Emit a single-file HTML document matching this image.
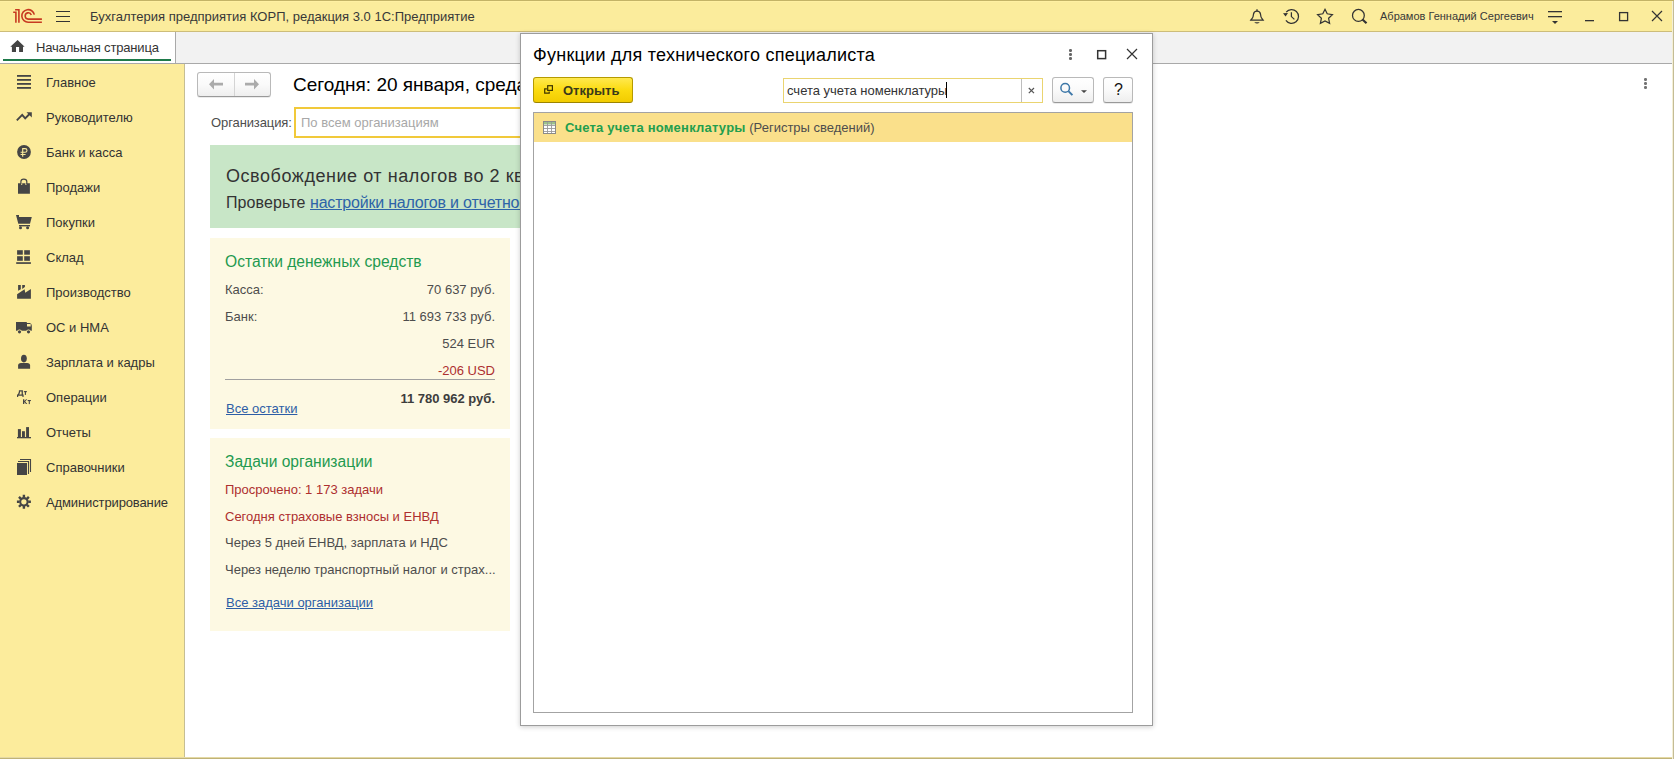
<!DOCTYPE html>
<html><head><meta charset="utf-8">
<style>
*{margin:0;padding:0;box-sizing:border-box}
html,body{width:1674px;height:759px;overflow:hidden;background:#fff;font-family:"Liberation Sans",sans-serif;color:#4d4d4d}
.a{position:absolute;white-space:nowrap}
svg.a{overflow:visible}
.si{position:absolute;left:46px;font-size:13px;color:#333;line-height:16px;white-space:nowrap}
.t13{font-size:13px;line-height:16px}
.lnk{text-decoration:underline}
.red{color:#ad2f2f}
.grn{color:#1f9a50}
.btn{position:absolute;border:1px solid #b9b9b9;border-bottom-color:#999;border-radius:3px;background:linear-gradient(#ffffff,#fafafa 50%,#eeeeee);box-shadow:0 1px 0 rgba(0,0,0,.08)}
</style></head><body>
<!-- ===== header ===== -->
<div class="a" style="left:0;top:0;width:1674px;height:32px;background:#fbec9c;border-bottom:1px solid #cdbd7a"></div>
<svg class="a" style="left:0;top:0" width="50" height="32">
<g fill="none" stroke="#c73a22" stroke-width="1.6" stroke-linecap="butt">
<path d="M13.2 12.3 H15.9 V22.8"/>
<path d="M15.1 9.7 H18.9 V22.8"/>
<path d="M34.3 14.6 A6.3 6.3 0 1 0 28.4 22.2 H41.9"/>
<path d="M31.3 14.9 A3.15 3.15 0 1 0 28.2 19.1 H41.9"/>
</g></svg>
<div class="a" style="left:56px;top:11px;width:14px;height:1.3px;background:#333"></div>
<div class="a" style="left:56px;top:16px;width:14px;height:1.3px;background:#333"></div>
<div class="a" style="left:56px;top:21px;width:14px;height:1.3px;background:#333"></div>
<div class="a t13" style="left:90px;top:9px;color:#383838">Бухгалтерия предприятия КОРП, редакция 3.0 1С:Предприятие</div>
<svg class="a" style="left:0;top:0" width="1674" height="32">
<g fill="none" stroke="#333" stroke-width="1.25">
<path d="M1250.9 20 L1252 18.6 Q1253.3 17 1253.5 14.2 Q1253.9 11.2 1257 11.2 Q1260.1 11.2 1260.5 14.2 Q1260.7 17 1262 18.6 L1263.1 20 Z"/>
<path d="M1286.2 12.2 A6.9 6.9 0 1 1 1285.9 20.4"/>
<path d="M1291.4 12.3 V16.6 L1294.4 19.4"/>
<path d="M1325 9.3 L1327.2 13.8 L1332.4 14.6 L1328.6 18.3 L1329.6 23.3 L1325 20.9 L1320.4 23.3 L1321.4 18.3 L1317.6 14.6 L1322.8 13.8 Z" stroke-linejoin="miter"/>
<circle cx="1358.4" cy="15.4" r="5.9"/>
</g>
<g fill="#333">
<circle cx="1257" cy="10.1" r="0.9"/>
<path d="M1254.2 22.2 H1259.8 Q1257 24.6 1254.2 22.2 Z"/>
<path d="M1283 13.2 L1288 12.9 L1285.6 16.6 Z"/>
</g>
<path d="M1362.5 19.5 L1366.5 23.3" stroke="#333" stroke-width="2.2"/>
<g fill="#333">
<rect x="1548" y="11" width="14" height="1.3"/>
<rect x="1548" y="16" width="14" height="1.3"/>
<path d="M1552 21 H1558 L1555 24 Z"/>
<rect x="1585" y="20" width="9" height="1.3"/>
</g>
<rect x="1619.6" y="12.6" width="8" height="8" fill="none" stroke="#333" stroke-width="1.3"/>
<path d="M1652 11 L1662 21 M1662 11 L1652 21" stroke="#333" stroke-width="1.2"/>
</svg>
<div class="a" style="left:1380px;top:10px;font-size:11px;line-height:13px;color:#383838">Абрамов Геннадий Сергеевич</div>


<!-- ===== tabs ===== -->
<div class="a" style="left:0;top:32px;width:1674px;height:32px;background:#f2f2f2;border-bottom:1px solid #a9a9a9"></div>
<div class="a" style="left:0;top:32px;width:176px;height:31px;background:#fff;border-right:1px solid #a9a9a9"></div>
<div class="a" style="left:3px;top:59px;width:168px;height:2px;background:#1e7a4a"></div>
<svg class="a" style="left:0;top:0" width="30" height="60"><path d="M17.6 40 L24.6 46.8 H23 V52 H19.1 V47 H16 V52 H11.9 V46.8 H10.3 Z" fill="#444"/></svg>
<div class="a t13" style="left:36px;top:40px;color:#333;letter-spacing:-0.17px">Начальная страница</div>

<!-- ===== sidebar ===== -->
<div class="a" style="left:0;top:64px;width:185px;height:695px;background:#fcec9c;border-right:1px solid #c6be93"></div>
<svg class="a" style="left:0;top:0" width="40" height="520">
<g fill="#454545">
<!-- главное -->
<rect x="17" y="75" width="14" height="1.8"/><rect x="17" y="79" width="14" height="1.8"/><rect x="17" y="83" width="14" height="1.8"/><rect x="17" y="87" width="14" height="1.8"/>
<!-- банк -->
<circle cx="24" cy="152" r="6.9"/>
<!-- продажи -->
<path d="M18 183.3 H21 V185 H22.2 V183.3 H25.4 V185 H26.6 V183.3 H29.9 V193.8 H18 Z"/>
<!-- покупки -->
<path d="M16 215 H19 V217 H31.8 L30 223.8 H18.3 Z"/>
<rect x="19" y="225" width="11" height="1.4"/>
<circle cx="20.5" cy="227.7" r="1.5"/><circle cx="27.6" cy="227.7" r="1.5"/>
<!-- склад -->
<rect x="17.1" y="250.2" width="5.7" height="4.5"/><rect x="24.2" y="250.2" width="5.7" height="4.5"/>
<rect x="17.1" y="256.2" width="5.7" height="4.6"/><rect x="24.2" y="256.2" width="5.7" height="4.6"/>
<rect x="16.2" y="262.2" width="14.7" height="1.7"/>
<!-- производство -->
<path d="M18.1 285 H20.8 V289.2 L18.1 290.7 Z"/>
<path d="M22.2 285 H24.9 V287 L22.2 289 Z"/>
<path d="M17.1 294.2 L24.6 289.3 L25.2 292.8 L30.9 289.1 V298.8 H17.1 Z"/>
<!-- ОС -->
<path d="M16 322 H26.8 V323 H29.8 Q31.8 323.5 31.8 325.8 V330.8 H16 Z"/>
<circle cx="19.5" cy="331.8" r="2.3" fill="#fcec9c"/><circle cx="28.5" cy="331.8" r="2.3" fill="#fcec9c"/>
<circle cx="19.5" cy="331.8" r="1.6"/><circle cx="28.5" cy="331.8" r="1.6"/>
<!-- зарплата -->
<ellipse cx="23.9" cy="358.6" rx="2.9" ry="3.8"/>
<path d="M18.1 368.8 V365.5 Q18.1 363 21 363 H27.2 Q30.1 363 30.1 365.5 V368.8 Z"/>
<!-- отчеты -->
<rect x="17.9" y="429.1" width="3" height="8.4"/><rect x="22" y="431.2" width="2.9" height="6.3"/><rect x="26.1" y="427.1" width="2.9" height="10.4"/>
<rect x="17" y="437" width="14" height="1.3"/>
<!-- справочники -->
<rect x="17" y="463" width="10" height="12"/>
</g>
<g fill="none" stroke="#454545">
<path d="M16.8 120.3 L22.2 114.8 L25.2 118.3 L29.5 114" stroke-width="1.9"/>
<path d="M20.9 184.5 V181.5 Q20.9 179.2 23.8 179.2 Q26.8 179.2 26.8 181.5 V184.5" stroke-width="1.2"/>
<path d="M18 461.5 H28.5 V474" stroke-width="1.1"/>
<path d="M20 459.5 H30.5 V472" stroke-width="1.1"/>
<circle cx="23.9" cy="501.8" r="3.7" stroke-width="2.1"/>
<path d="M23.9 494.8 V497.5 M23.9 506 V508.8 M16.9 501.8 H19.6 M28.2 501.8 H30.9 M18.95 496.85 L20.9 498.8 M26.9 504.8 L28.85 506.75 M28.85 496.85 L26.9 498.8 M20.9 504.8 L18.95 506.75" stroke-width="2.4"/>
</g>
<path d="M26.5 112.2 H31.8 V117.5 Z" fill="#454545"/>
<g fill="#fcec9c">
<rect x="27" y="324" width="3.7" height="2.5"/>
</g>
<g fill="none" stroke="#fcec9c" stroke-width="1.1">
<path d="M22.7 156.8 V148.6 H25 Q27 148.6 27 150.4 Q27 152.2 25 152.2 H20.6 M20.6 154.5 H25.6"/>
</g>
<g fill="#454545">
<path d="M18.9 390.2 H22.9 V394.6 H23.6 V396.9 H22.4 V395.8 H18.2 V396.9 H17 V394.6 H17.7 Q18.7 393 18.9 391.2 Z M20.1 391.4 Q20 393.3 19.2 394.6 H21.6 V391.4 Z"/>
<rect x="23.9" y="391.1" width="3" height="1.1"/><rect x="24.85" y="391.1" width="1.1" height="3.8"/>
<path d="M23 399.2 H24.3 V401.1 L26.1 399.2 H27.2 L25.2 401.5 L27.3 404.1 H26 L24.3 402.1 V404.1 H23 Z"/>
<rect x="27.7" y="400" width="3.2" height="1.1"/><rect x="28.75" y="400" width="1.1" height="4.1"/>
</g>
</svg>
<div class="si" style="top:75px">Главное</div>
<div class="si" style="top:110px">Руководителю</div>
<div class="si" style="top:145px">Банк и касса</div>
<div class="si" style="top:180px">Продажи</div>
<div class="si" style="top:215px">Покупки</div>
<div class="si" style="top:250px">Склад</div>
<div class="si" style="top:285px">Производство</div>
<div class="si" style="top:320px">ОС и НМА</div>
<div class="si" style="top:355px">Зарплата и кадры</div>
<div class="si" style="top:390px">Операции</div>
<div class="si" style="top:425px">Отчеты</div>
<div class="si" style="top:460px">Справочники</div>
<div class="si" style="top:495px;letter-spacing:-0.12px">Администрирование</div>

<!-- ===== main ===== -->
<div class="btn" style="left:197px;top:72px;width:74px;height:25px"></div>
<div class="a" style="left:234px;top:73px;width:1px;height:23px;background:#d4d4d4"></div>
<svg class="a" style="left:0;top:0" width="280" height="100"><g fill="#ababab">
<path d="M209 84.2 L214 79 V82.8 H223 V85.6 H214 V89.5 Z"/>
<path d="M259 84.2 L254 79 V82.8 H245 V85.6 H254 V89.5 Z"/>
</g></svg>
<div class="a" style="left:293px;top:74px;font-size:19px;line-height:22px;color:#000">Сегодня: 20 января, среда</div>
<div class="a t13" style="left:211px;top:115px;color:#4d4d4d;letter-spacing:-0.1px">Организация:</div>
<div class="a" style="left:294px;top:107px;width:260px;height:31px;border:2px solid #f1c93a;background:#fff"></div>
<div class="a" style="left:301px;top:115px;font-size:13px;line-height:16px;color:#a8a8a8">По всем организациям</div>
<!-- banner -->
<div class="a" style="left:210px;top:145px;width:330px;height:83px;background:#c8e6c7"></div>
<div class="a" style="left:226px;top:166px;font-size:18px;line-height:20px;color:#333;letter-spacing:0.55px">Освобождение от налогов во 2 квартале</div>
<div class="a" style="left:226px;top:193px;font-size:16px;line-height:19px;color:#333;letter-spacing:0.1px">Проверьте <span class="lnk" style="color:#2d63a8;letter-spacing:-0.2px">настройки налогов и отчетности</span></div>
<!-- card 1 -->
<div class="a" style="left:210px;top:238px;width:300px;height:191px;background:#fdf9e3"></div>
<div class="a grn" style="left:225px;top:253px;font-size:15.6px;line-height:18px">Остатки денежных средств</div>
<div class="a t13" style="left:225px;top:282px">Касса:</div>
<div class="a t13" style="left:225px;top:309px">Банк:</div>
<div class="a t13" style="right:1179px;top:282px">70 637 руб.</div>
<div class="a t13" style="right:1179px;top:309px">11 693 733 руб.</div>
<div class="a t13" style="right:1179px;top:336px">524 EUR</div>
<div class="a t13 red" style="right:1179px;top:363px">-206 USD</div>
<div class="a" style="left:225px;top:379px;width:270px;height:1px;background:#a0a0a0"></div>
<div class="a t13" style="right:1179px;top:391px;font-weight:bold;color:#3d3d3d">11 780 962 руб.</div>
<div class="a t13 lnk" style="left:226px;top:401px;color:#2d5ea6">Все остатки</div>
<!-- card 2 -->
<div class="a" style="left:210px;top:438px;width:300px;height:193px;background:#fdf9e3"></div>
<div class="a grn" style="left:225px;top:453px;font-size:15.6px;line-height:18px">Задачи организации</div>
<div class="a t13 red" style="left:225px;top:482px">Просрочено: 1 173 задачи</div>
<div class="a t13 red" style="left:225px;top:509px">Сегодня страховые взносы и ЕНВД</div>
<div class="a t13" style="left:225px;top:535px">Через 5 дней ЕНВД, зарплата и НДС</div>
<div class="a t13" style="left:225px;top:562px">Через неделю транспортный налог и страх...</div>
<div class="a t13 lnk" style="left:226px;top:595px;color:#2d5ea6">Все задачи организации</div>
<svg class="a" style="left:0;top:0" width="1674" height="100"><g fill="#737373"><rect x="1644" y="78" width="3" height="3" rx="1.2"/><rect x="1644" y="82" width="3" height="3" rx="1.2"/><rect x="1644" y="86" width="3" height="3" rx="1.2"/></g></svg>

<!-- ===== dialog ===== -->
<div class="a" style="left:520px;top:33px;width:633px;height:693px;background:#fff;border:1px solid #9c9c9c;box-shadow:0 1px 5px rgba(0,0,0,.2)"></div>
<div class="a" style="left:533px;top:45px;font-size:18px;line-height:20px;color:#000;letter-spacing:0.26px">Функции для технического специалиста</div>
<svg class="a" style="left:0;top:0" width="1160" height="140">
<g fill="#666"><rect x="1069" y="49" width="3" height="3" rx="1.2"/><rect x="1069" y="53" width="3" height="3" rx="1.2"/><rect x="1069" y="57" width="3" height="3" rx="1.2"/></g>
<rect x="1097.7" y="50.7" width="7.9" height="7.9" fill="none" stroke="#333" stroke-width="1.5"/>
<path d="M1127 49 L1137 59 M1137 49 L1127 59" stroke="#333" stroke-width="1.2"/>
</svg>
<!-- Открыть -->
<div class="a" style="left:533px;top:77px;width:100px;height:26px;border:1px solid #b59a00;border-bottom-color:#9c8400;border-radius:3px;background:linear-gradient(#ffe94f,#fbdb10 50%,#f2cc00)"></div>
<svg class="a" style="left:0;top:0" width="560" height="100"><g fill="none" stroke="#3d3500" stroke-width="1.2">
<path d="M546.9 88.8 H544.7 V93.2 H549.2 V91.4"/>
<rect x="547.7" y="85.7" width="4.7" height="4.7"/>
</g></svg>
<div class="a t13" style="left:563px;top:83px;font-weight:bold;color:#3a3a1a">Открыть</div>
<!-- search input -->
<div class="a" style="left:783px;top:78px;width:260px;height:25px;border:1px solid #ead470;background:#fff"></div>
<div class="a" style="left:1021px;top:79px;width:1px;height:23px;background:#bdbdbd"></div>
<div class="a t13" style="left:787px;top:83px;color:#333">счета учета номенклатуры</div>
<div class="a" style="left:946px;top:82px;width:1px;height:16px;background:#000"></div>
<svg class="a" style="left:0;top:0" width="1040" height="100"><path d="M1028.8 88 L1034 93.2 M1034 88 L1028.8 93.2" stroke="#555" stroke-width="1.2"/></svg>
<div class="btn" style="left:1052px;top:77px;width:42px;height:26px"></div>
<div class="btn" style="left:1103px;top:77px;width:30px;height:26px"></div>
<svg class="a" style="left:0;top:0" width="1140" height="100">
<circle cx="1065.2" cy="87.9" r="4.3" fill="none" stroke="#3e78a8" stroke-width="1.5"/>
<path d="M1068.4 91.1 L1072.4 95.1" stroke="#3e78a8" stroke-width="2"/>
<path d="M1081 90.2 H1087 L1084 93 Z" fill="#444"/>
</svg>
<div class="a" style="left:1114px;top:81px;font-size:16px;line-height:18px;color:#111">?</div>
<!-- list -->
<div class="a" style="left:533px;top:112px;width:600px;height:601px;border:1px solid #a3a3a3;background:#fff"></div>
<div class="a" style="left:534px;top:113px;width:598px;height:29px;background:#fae08b"></div>
<svg class="a" style="left:0;top:0.5px" width="560" height="140">
<rect x="543.5" y="120.5" width="12" height="12" fill="#fff" stroke="#8a8a8a" stroke-width="1"/>
<rect x="544" y="121" width="11" height="2.5" fill="#9bc38a"/>
<path d="M544 124.5 H555 M544 127.5 H555 M544 130.5 H555 M547.5 121 V132 M551.5 121 V132" stroke="#9a9a9a" stroke-width="0.9"/>
</svg>
<div class="a t13" style="left:565px;top:120px;color:#4d4d4d"><b style="color:#229e4e;letter-spacing:0.22px">Счета учета номенклатуры</b> (Регистры сведений)</div>
<!-- bottom border -->
<div class="a" style="left:0;top:757px;width:1674px;height:1px;background:#e4d9a4"></div><div class="a" style="left:0;top:758px;width:1674px;height:1px;background:#bfb277"></div>
<div class="a" style="left:1672px;top:0;width:1px;height:759px;background:#f4efd6"></div><div class="a" style="left:1673px;top:0;width:1px;height:759px;background:#c4bc95"></div>
<div class="a" style="left:0;top:0;width:1674px;height:1px;background:#c3b366"></div><div class="a" style="left:0;top:1px;width:1672px;height:1px;background:#fff0a2"></div>
</body></html>
